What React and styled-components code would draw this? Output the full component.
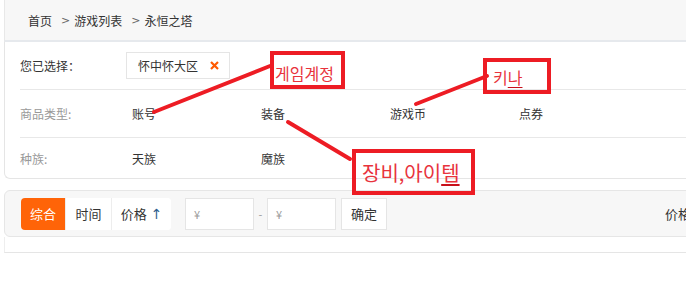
import styled, { createGlobalStyle } from "styled-components"

const GlobalStyle = createGlobalStyle`
  body{
    margin:0;
    overflow:hidden;
    background:#fff;
    font-family:"Noto Sans CJK SC","Noto Sans",sans-serif;
    color:#333;
  }
`

const types = ["账号", "装备", "游戏币", "点券"]
const races = ["天族", "魔族"]

export default function App() {
  return (
    <>
      <GlobalStyle />
      <Page>
        <Breadcrumb>
          <span>首页</span>
          <Sep>&gt;</Sep>
          <span>游戏列表</span>
          <Sep>&gt;</Sep>
          <span>永恒之塔</span>
        </Breadcrumb>

        <FilterPanel>
          <Row $h={47}>
            <Label $w={106}>您已选择：</Label>
            <Tag>
              怀中怀大区
              <svg width="9" height="9" viewBox="0 0 9 9">
                <path d="M1 1L8 8M8 1L1 8" stroke="#ff5a00" strokeWidth="2.2" />
              </svg>
            </Tag>
          </Row>
          <Row $h={47}>
            <Label $muted>商品类型:</Label>
            {types.map(t => <Option key={t}>{t}</Option>)}
          </Row>
          <Row $h={40} $last>
            <Label $muted>种族:</Label>
            {races.map(t => <Option key={t}>{t}</Option>)}
          </Row>
        </FilterPanel>

        <SortBar>
          <SortGroup>
            <SortButton $w={44} $active>综合</SortButton>
            <SortButton $w={45}>时间</SortButton>
            <SortButton $w={59}>价格 <Arrow>↑</Arrow></SortButton>
          </SortGroup>
          <PriceInput>¥</PriceInput>
          <Dash>-</Dash>
          <PriceInput $first={false}>¥</PriceInput>
          <Confirm>确定</Confirm>
          <RightLabel>价格</RightLabel>
        </SortBar>

        <ListHead />
      </Page>

      <Lines width="686" height="291" viewBox="0 0 686 291">
        <path d="M154 112L270 66" />
        <path d="M416 104L487 76" />
        <path d="M288 122L350 159" />
      </Lines>

      <Note $x={270} $y={51} $w={75} $h={38} $pl={1} $pt={6} $fs={16}>게임계정</Note>
      <Note $x={483} $y={58} $w={68} $h={36} $pl={6} $pt={2} $fs={16}>
        키<Mark>나</Mark>
      </Note>
      <Note $x={352} $y={149} $w={123} $h={46} $pl={6} $pt={0} $fs={20}>
        장비,아이<Mark>템</Mark>
      </Note>
    </>
  )
}

const Page = styled.div`
  width:1000px;
  padding-left:4px;
  font-size:12px;
`
const Breadcrumb = styled.div`
  height:40px;
  display:flex;
  align-items:center;
  padding-left:23px;
  background:#f7f7f7;
  border-left:1px solid #e8e8e8;
  border-bottom:2px solid #e6e9ed;
  color:#333;
`
const Sep = styled.span`
  margin:0 4px 0 9px;
  color:#666;
  font-family:"DejaVu Sans",sans-serif;
  font-size:11px;
`
const FilterPanel = styled.div`
  padding-left:15px;
  border-left:1px solid #e5e5e5;
  border-bottom:1px solid #e5e5e5;
  border-bottom-left-radius:6px;
`
const Row = styled.div`
  height:${({ $h }) => $h}px;
  display:flex;
  align-items:center;
  border-bottom:${({ $last }) => $last ? "none" : "1px solid #e8e8e8"};
`
const Label = styled.div`
  width:${({ $w }) => $w || 112}px;
  color:${({ $muted }) => $muted ? "#999" : "#333"};
`
const Option = styled.div`
  width:129px;
  color:#333;
`
const Tag = styled.div`
  height:25px;
  display:flex;
  align-items:center;
  gap:12px;
  padding:0 10px 0 11px;
  border:1px solid #e5e5e5;
  color:#333;
  font-size:12px;
`
const SortBar = styled.div`
  margin-top:11px;
  height:45px;
  display:flex;
  align-items:center;
  padding-left:16px;
  background:#f7f7f7;
  border:1px solid #e6e6e6;
  border-radius:6px;
  font-size:13px;
`
const SortGroup = styled.div`
  display:flex;
  height:32px;
  background:#fff;
  border-radius:4px;
  overflow:hidden;
`
const SortButton = styled.div`
  width:${({ $w }) => $w}px;
  display:flex;
  align-items:center;
  justify-content:center;
  background:${({ $active }) => $active ? "#ff6408" : "#fff"};
  color:${({ $active }) => $active ? "#fff" : "#333"};
  & + &{ border-left:1px solid #ededed; }
`
const Arrow = styled.span`
  margin-left:4px;
  color:#2f5f8f;
  font-family:"DejaVu Sans",sans-serif;
  font-size:14px;
`
const PriceInput = styled.div`
  width:59px;
  height:30px;
  margin-left:${({ $first }) => $first === false ? 0 : 14}px;
  padding-left:8px;
  display:flex;
  align-items:center;
  background:#fff;
  border:1px solid #e5e5e5;
  color:#999;
  font-size:11px;
`
const Dash = styled.div`
  width:13px;
  text-align:center;
  color:#999;
  font-size:11px;
`
const Confirm = styled.div`
  width:44px;
  height:30px;
  margin-left:5px;
  display:flex;
  align-items:center;
  justify-content:center;
  background:#fff;
  border:1px solid #e5e5e5;
  color:#333;
`
const RightLabel = styled.div`
  margin-left:278px;
  color:#333;
  white-space:nowrap;
`
const ListHead = styled.div`
  height:15px;
  border-left:1px solid #eee;
  border-bottom:1px solid #e5e5e5;
`
const Lines = styled.svg`
  position:absolute;
  left:0;
  top:0;
  pointer-events:none;
  path{
    stroke:#ed1c24;
    stroke-width:4;
    stroke-linecap:round;
  }
`
const Note = styled.div`
  position:absolute;
  left:${({ $x }) => $x}px;
  top:${({ $y }) => $y}px;
  width:${({ $w }) => $w}px;
  height:${({ $h }) => $h}px;
  box-sizing:border-box;
  border:4px solid #ed1c24;
  background:transparent;
  display:flex;
  align-items:center;
  padding-left:${({ $pl }) => $pl}px;
  padding-top:${({ $pt }) => $pt}px;
  font-family:"Noto Sans CJK KR","Noto Sans CJK SC",sans-serif;
  font-size:${({ $fs }) => $fs}px;
  color:#e8333c;
  white-space:nowrap;
`
const Mark = styled.span`
  text-decoration:underline;
  text-decoration-color:#c8101a;
  text-underline-offset:3px;
`
